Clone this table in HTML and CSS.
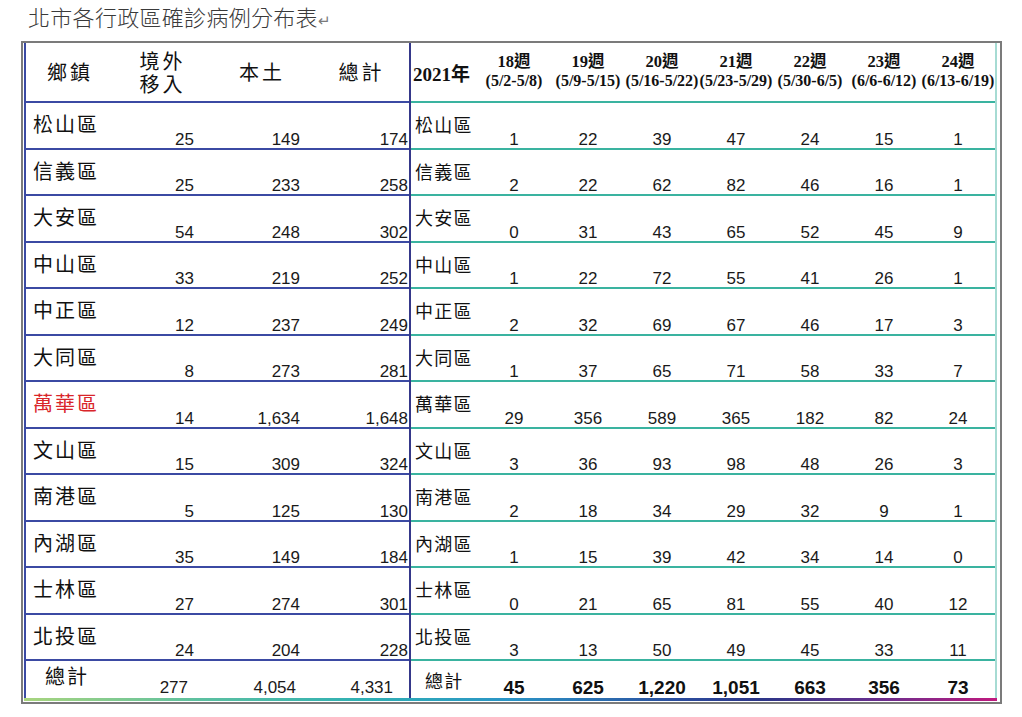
FILE: index.html
```html
<!DOCTYPE html>
<html lang="zh-Hant">
<head>
<meta charset="utf-8">
<title>北市各行政區確診病例分布表</title>
<link rel="stylesheet" href="styles.css">
</head>
<body>
<h1 class="title">北市各行政區確診病例分布表<span class="ret">↵</span></h1>
<div class="wrap">
  <div class="frame">
    <div class="tables">
      <div class="left">
        <div class="lhead">
          <div>鄉鎮</div>
          <div class="two"><div>境外</div><div>移入</div></div>
          <div>本土</div>
          <div>總計</div>
        </div>
        <div class="lrow"><div class="name">松山區</div><div class="num">25</div><div class="num">149</div><div class="num">174</div></div>
        <div class="lrow"><div class="name">信義區</div><div class="num">25</div><div class="num">233</div><div class="num">258</div></div>
        <div class="lrow"><div class="name">大安區</div><div class="num">54</div><div class="num">248</div><div class="num">302</div></div>
        <div class="lrow"><div class="name">中山區</div><div class="num">33</div><div class="num">219</div><div class="num">252</div></div>
        <div class="lrow"><div class="name">中正區</div><div class="num">12</div><div class="num">237</div><div class="num">249</div></div>
        <div class="lrow"><div class="name">大同區</div><div class="num">8</div><div class="num">273</div><div class="num">281</div></div>
        <div class="lrow"><div class="name red">萬華區</div><div class="num">14</div><div class="num">1,634</div><div class="num">1,648</div></div>
        <div class="lrow"><div class="name">文山區</div><div class="num">15</div><div class="num">309</div><div class="num">324</div></div>
        <div class="lrow"><div class="name">南港區</div><div class="num">5</div><div class="num">125</div><div class="num">130</div></div>
        <div class="lrow"><div class="name">內湖區</div><div class="num">35</div><div class="num">149</div><div class="num">184</div></div>
        <div class="lrow"><div class="name">士林區</div><div class="num">27</div><div class="num">274</div><div class="num">301</div></div>
        <div class="lrow"><div class="name">北投區</div><div class="num">24</div><div class="num">204</div><div class="num">228</div></div>
        <div class="lrow ltotal"><div class="name">總計</div><div class="num">277</div><div class="num">4,054</div><div class="num">4,331</div></div>
      </div>
      <div class="right">
        <div class="rhead">
          <div class="year">2021年</div>
          <div class="wk"><div class="wkn">18週</div><div>(5/2-5/8)</div></div>
          <div class="wk"><div class="wkn">19週</div><div>(5/9-5/15)</div></div>
          <div class="wk"><div class="wkn">20週</div><div>(5/16-5/22)</div></div>
          <div class="wk"><div class="wkn">21週</div><div>(5/23-5/29)</div></div>
          <div class="wk"><div class="wkn">22週</div><div>(5/30-6/5)</div></div>
          <div class="wk"><div class="wkn">23週</div><div>(6/6-6/12)</div></div>
          <div class="wk"><div class="wkn">24週</div><div>(6/13-6/19)</div></div>
        </div>
        <div class="rrow"><div class="rname">松山區</div><div class="rnum">1</div><div class="rnum">22</div><div class="rnum">39</div><div class="rnum">47</div><div class="rnum">24</div><div class="rnum">15</div><div class="rnum">1</div></div>
        <div class="rrow"><div class="rname">信義區</div><div class="rnum">2</div><div class="rnum">22</div><div class="rnum">62</div><div class="rnum">82</div><div class="rnum">46</div><div class="rnum">16</div><div class="rnum">1</div></div>
        <div class="rrow"><div class="rname">大安區</div><div class="rnum">0</div><div class="rnum">31</div><div class="rnum">43</div><div class="rnum">65</div><div class="rnum">52</div><div class="rnum">45</div><div class="rnum">9</div></div>
        <div class="rrow"><div class="rname">中山區</div><div class="rnum">1</div><div class="rnum">22</div><div class="rnum">72</div><div class="rnum">55</div><div class="rnum">41</div><div class="rnum">26</div><div class="rnum">1</div></div>
        <div class="rrow"><div class="rname">中正區</div><div class="rnum">2</div><div class="rnum">32</div><div class="rnum">69</div><div class="rnum">67</div><div class="rnum">46</div><div class="rnum">17</div><div class="rnum">3</div></div>
        <div class="rrow"><div class="rname">大同區</div><div class="rnum">1</div><div class="rnum">37</div><div class="rnum">65</div><div class="rnum">71</div><div class="rnum">58</div><div class="rnum">33</div><div class="rnum">7</div></div>
        <div class="rrow"><div class="rname">萬華區</div><div class="rnum">29</div><div class="rnum">356</div><div class="rnum">589</div><div class="rnum">365</div><div class="rnum">182</div><div class="rnum">82</div><div class="rnum">24</div></div>
        <div class="rrow"><div class="rname">文山區</div><div class="rnum">3</div><div class="rnum">36</div><div class="rnum">93</div><div class="rnum">98</div><div class="rnum">48</div><div class="rnum">26</div><div class="rnum">3</div></div>
        <div class="rrow"><div class="rname red">南港區</div><div class="rnum">2</div><div class="rnum">18</div><div class="rnum">34</div><div class="rnum">29</div><div class="rnum">32</div><div class="rnum">9</div><div class="rnum">1</div></div>
        <div class="rrow"><div class="rname">內湖區</div><div class="rnum">1</div><div class="rnum">15</div><div class="rnum">39</div><div class="rnum">42</div><div class="rnum">34</div><div class="rnum">14</div><div class="rnum">0</div></div>
        <div class="rrow"><div class="rname">士林區</div><div class="rnum">0</div><div class="rnum">21</div><div class="rnum">65</div><div class="rnum">81</div><div class="rnum">55</div><div class="rnum">40</div><div class="rnum">12</div></div>
        <div class="rrow"><div class="rname">北投區</div><div class="rnum">3</div><div class="rnum">13</div><div class="rnum">50</div><div class="rnum">49</div><div class="rnum">45</div><div class="rnum">33</div><div class="rnum">11</div></div>
        <div class="rrow rtotal"><div class="rname">總計</div><div class="rnum">45</div><div class="rnum">625</div><div class="rnum">1,220</div><div class="rnum">1,051</div><div class="rnum">663</div><div class="rnum">356</div><div class="rnum">73</div></div>
      </div>
    </div>
    <div class="bar"></div>
  </div>
  <span class="ret2">↵</span>
</div>
</body>
</html>
```

FILE: styles.css
```css
* { box-sizing: border-box; }

body {
  margin: 0;
  background: #ffffff;
  color: #111;
  font-family: "Liberation Sans", Arial, sans-serif;
}

.title {
  margin: 0;
  height: 41px;
  padding-left: 28px;
  font-family: "Noto Sans CJK TC", sans-serif;
  font-size: 22px;
  font-weight: 300;
  line-height: 32px;
  letter-spacing: 0.3px;
  color: #3a3a3a;
}

.ret {
  font-size: 15px;
  color: #7a7a7a;
}

.wrap {
  display: flex;
  align-items: flex-end;
  margin-left: 21px;
}

.frame {
  width: 981px;
  border: 2px solid #7b7b7b;
  padding: 0 3px 1px 1px;
  background: #fff;
}

.ret2 {
  font-size: 13px;
  line-height: 14px;
  color: #8a8a8a;
  margin-left: 1px;
  margin-bottom: -12px;
}

.tables {
  display: flex;
}

.left {
  width: 387px;
  border-left: 2px solid #3b4aa3;
  border-right: 2px solid #35388a;
}

.right {
  width: 586px;
  border-right: 2px solid #a6dbd3;
}

.bar {
  height: 3px;
  background: linear-gradient(to right, #a9d57e 0%, #5cc0a0 18%, #2fb0b4 35%, #2a94c6 50%, #2b4a9c 68%, #2d3588 76%, #6a2e8e 88%, #c0197e 100%);
}

/* ---------- left table ---------- */
.lhead {
  display: grid;
  grid-template-columns: 88px 96px 104px 95px;
  height: 60px;
  border-bottom: 2px solid #3b4aa3;
  align-items: center;
  justify-items: center;
  font-family: "Noto Sans CJK TC", sans-serif;
  font-size: 20px;
  line-height: 24px;
  letter-spacing: 3px;
  color: #111;
}

.lhead .two {
  display: flex;
  flex-direction: column;
  gap: 0;
  text-align: center;
  padding-left: 1px;
}

.lhead .two div {
  height: 23px;
  line-height: 23px;
  overflow: visible;
}

.lrow {
  display: grid;
  grid-template-columns: 104px 64px 106px 109px;
  height: 46.5px;
  border-bottom: 2px solid #3b4aa3;
}

.name {
  align-self: start;
  padding: 9px 0 0 7px;
  font-family: "Noto Sans CJK TC", sans-serif;
  font-size: 20px;
  line-height: 24px;
  letter-spacing: 2px;
  color: #111;
}

.num {
  align-self: end;
  text-align: right;
  font-family: "Liberation Sans", Arial, sans-serif;
  font-size: 17px;
  line-height: 16px;
  color: #1a1a1a;
}

.lrow .num:last-child {
  padding-right: 1px;
}

.red {
  color: #d9252a;
}

.ltotal {
  height: 37px;
  border-bottom: none;
}

.ltotal .name {
  padding: 3px 0 0 19px;
}

.ltotal .num {
  padding-bottom: 2px;
}

.ltotal .num:nth-child(2) { padding-right: 6px; }
.ltotal .num:nth-child(3) { padding-right: 4px; }
.ltotal .num:last-child { padding-right: 16px; }

/* ---------- right table ---------- */
.rhead {
  display: grid;
  grid-template-columns: 66px repeat(7, 74px);
  height: 60px;
  border-bottom: 2px solid #3ab3a0;
  align-items: center;
}

.year {
  padding-left: 2px;
  padding-top: 1px;
  font-family: "Liberation Serif", "Noto Sans CJK TC", serif;
  font-size: 19px;
  font-weight: bold;
  white-space: nowrap;
  color: #111;
}

.wk {
  padding-bottom: 2px;
  text-align: center;
  white-space: nowrap;
  font-family: "Liberation Serif", "Noto Sans CJK TC", serif;
  font-size: 16px;
  font-weight: bold;
  line-height: 18px;
  color: #111;
}

.wkn {
  font-size: 16.5px;
  margin-bottom: 1px;
}

.rrow {
  display: grid;
  grid-template-columns: 66px repeat(7, 74px);
  height: 46.5px;
  border-bottom: 2px solid #3ab3a0;
}

.rname {
  align-self: start;
  padding: 10px 0 0 4px;
  font-family: "Noto Sans CJK TC", sans-serif;
  font-size: 18px;
  line-height: 22px;
  letter-spacing: 1.3px;
  white-space: nowrap;
  color: #111;
}

.rnum {
  align-self: end;
  text-align: center;
  font-family: "Liberation Sans", Arial, sans-serif;
  font-size: 17px;
  line-height: 16px;
  color: #1a1a1a;
}

.rtotal {
  height: 37px;
  border-bottom: none;
}

.rtotal .rname {
  padding: 8px 0 0 14px;
}

.rtotal .rnum {
  padding-bottom: 2px;
  font-size: 19px;
  font-weight: bold;
  color: #111;
}
```
